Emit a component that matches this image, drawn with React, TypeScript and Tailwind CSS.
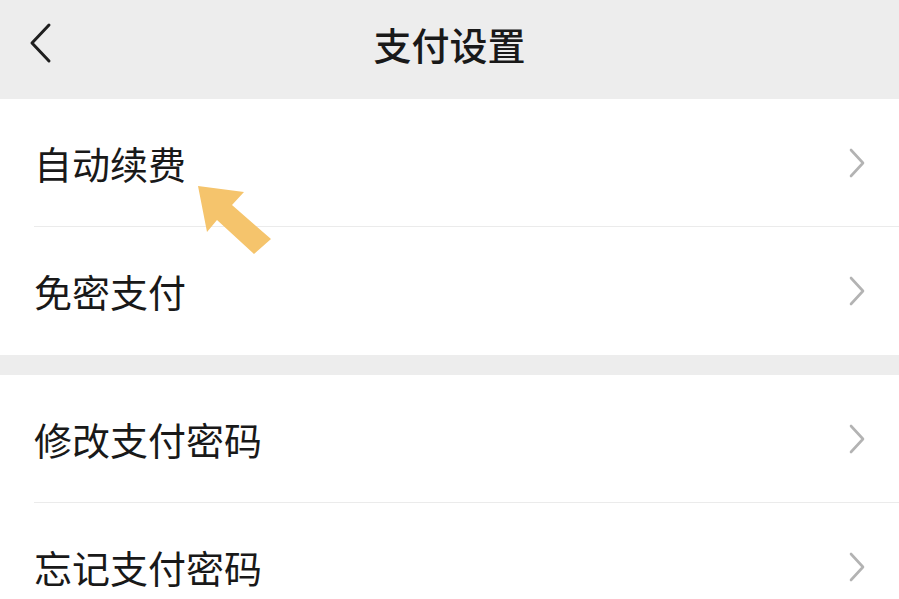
import React from "react";

const Chevron = () => (
  <svg width="20" height="32" viewBox="0 0 20 32" className="shrink-0">
    <path d="M4 3 L16 16 L4 29" fill="none" stroke="#b3b3b3" strokeWidth="2.6" strokeLinecap="round" strokeLinejoin="round" />
  </svg>
);

const Row = ({ label, divider }: { label: string; divider?: boolean }) => (
  <div className="relative flex h-[128px] items-center justify-between bg-white pl-[34px] pr-[32px]">
    <span className="text-[38px] leading-none text-[#191919]">{label}</span>
    <Chevron />
    {divider && <div className="absolute bottom-0 left-[34px] right-0 h-px bg-[#ebebeb]" />}
  </div>
);

export default function App() {
  return (
    <div
      className="relative h-[599px] w-[899px] overflow-hidden bg-[#ededed]"
      style={{ fontFamily: '"Noto Sans CJK SC", "Noto Sans", sans-serif' }}
    >
      <div className="relative flex h-[99px] items-center justify-center bg-[#ededed] pb-[11px]">
        <svg width="30" height="44" viewBox="0 0 30 44" className="absolute left-[27px] top-[22px]">
          <path d="M22 3 L5 21 L22 39" fill="none" stroke="#1f1f1f" strokeWidth="3" strokeLinecap="round" strokeLinejoin="round" />
        </svg>
        <span className="text-[38px] font-medium leading-none text-[#191919]">支付设置</span>
      </div>
      <div className="flex flex-col">
        <Row label="自动续费" divider />
        <Row label="免密支付" />
        <div className="h-[20px] bg-[#ededed]" />
        <Row label="修改支付密码" divider />
        <Row label="忘记支付密码" />
      </div>
      <svg width="899" height="599" className="pointer-events-none absolute left-0 top-0">
        <polygon
          points="198,186 244,192 232,205 271,239 254,254 217,220 207,232"
          fill="#f5c46c"
        />
      </svg>
    </div>
  );
}
